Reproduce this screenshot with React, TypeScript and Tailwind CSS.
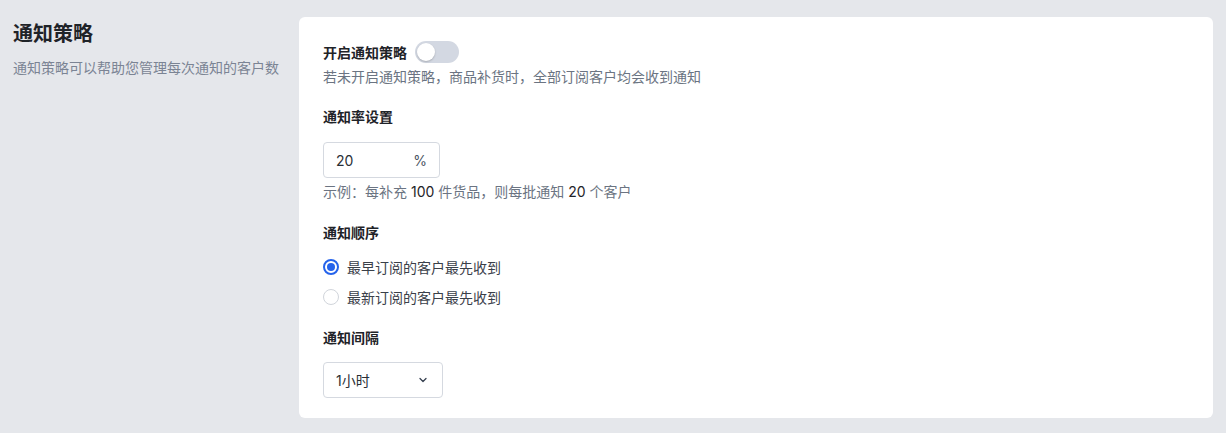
import React from "react";

export default function App() {
  const font = { fontFamily: '"Inter", "Noto Sans CJK SC", sans-serif' };
  return (
    <div className="w-[1226px] h-[433px] bg-[#e5e7eb] flex" style={font}>
      <div className="w-[299px] shrink-0 pl-[13px] pt-[20px]">
        <div className="text-[20px] leading-[28px] font-bold text-[#1f2328]">通知策略</div>
        <div className="mt-[10px] text-[14px] leading-[20px] text-[#7b8494]">通知策略可以帮助您管理每次通知的客户数</div>
      </div>
      <div className="mt-[17px] w-[914px] h-[401px] bg-white rounded-[6px] pl-[24px] pt-[24px]">
        <div className="flex items-center h-[22px]">
          <span className="text-[14px] font-semibold text-[#1f2328]">开启通知策略</span>
          <div className="ml-[8px] w-[44px] h-[22px] rounded-full bg-[#d3d8e2] p-[2px] flex items-center">
            <div className="w-[18px] h-[18px] rounded-full bg-white shadow-[0_1px_2px_rgba(0,0,0,0.2)]" />
          </div>
        </div>
        <div className="mt-[4px] text-[14px] leading-[20px] text-[#6b7482]">若未开启通知策略，商品补货时，全部订阅客户均会收到通知</div>

        <div className="mt-[20px] text-[14px] leading-[20px] font-semibold text-[#1f2328]">通知率设置</div>
        <div className="mt-[15px] w-[117px] h-[36px] border border-[#d5d9e0] rounded-[4px] flex items-center justify-between px-[12px] text-[14px] text-[#2a2f36]">
          <span>20</span>
          <span className="text-[#4b5563]">%</span>
        </div>
        <div className="mt-[4px] text-[14px] leading-[20px] text-[#6b7482]">
          示例：每补充 <span className="text-[#1f2328]">100</span> 件货品，则每批通知 <span className="text-[#1f2328]">20</span> 个客户
        </div>

        <div className="mt-[21px] text-[14px] leading-[20px] font-semibold text-[#1f2328]">通知顺序</div>
        <div className="mt-[14px] flex items-center h-[20px]">
          <div className="w-[16px] h-[16px] rounded-full border-[2px] border-[#2563eb] flex items-center justify-center">
            <div className="w-[8px] h-[8px] rounded-full bg-[#2563eb]" />
          </div>
          <span className="ml-[8px] text-[14px] text-[#3a4049]">最早订阅的客户最先收到</span>
        </div>
        <div className="mt-[10px] flex items-center h-[20px]">
          <div className="w-[16px] h-[16px] rounded-full border-[1.5px] border-[#d1d5db]" />
          <span className="ml-[8px] text-[14px] text-[#3a4049]">最新订阅的客户最先收到</span>
        </div>

        <div className="mt-[21px] text-[14px] leading-[20px] font-semibold text-[#1f2328]">通知间隔</div>
        <div className="mt-[14px] w-[120px] h-[36px] border border-[#d5d9e0] rounded-[4px] flex items-center justify-between pl-[12px] pr-[13px] text-[14px] text-[#2a2f36]">
          <span>1小时</span>
          <svg width="12" height="12" viewBox="0 0 12 12" fill="none">
            <path d="M3 4.5L6 7.5L9 4.5" stroke="#374151" strokeWidth="1.3" strokeLinecap="round" strokeLinejoin="round" />
          </svg>
        </div>
      </div>
    </div>
  );
}
